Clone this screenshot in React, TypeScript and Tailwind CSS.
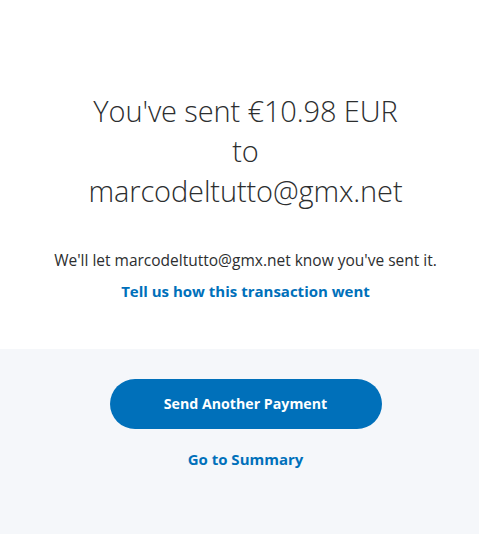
export default function App() {
  return (
    <div className="w-[479px] h-[534px] flex flex-col" style={{ fontFamily: '"Open Sans", "Liberation Sans", sans-serif' }}>
      <div className="bg-white h-[349px] flex flex-col items-center pt-[91px] pl-[12px]">
        <h1 className="text-[29px] leading-[40px] font-light text-[#2c2e2f] text-center tracking-[-0.12px]">
          You've sent €10.98 EUR<br />to<br />marcodeltutto@gmx.net
        </h1>
        <p className="mt-[39px] text-[15.5px] leading-[20px] text-[#2c2e2f]">We'll let marcodeltutto@gmx.net know you've sent it.</p>
        <a className="mt-[11px] text-[15px] leading-[20px] font-bold text-[#0070ba]">Tell us how this transaction went</a>
      </div>
      <div className="flex-1 bg-[#f5f7fa] flex flex-col items-center pt-[30px] pl-[12px]">
        <button className="w-[272px] h-[50px] rounded-full bg-[#0070ba] text-white text-[14.2px] font-bold">Send Another Payment</button>
        <a className="mt-[20px] text-[15px] leading-[20px] font-bold text-[#0070ba]">Go to Summary</a>
      </div>
    </div>
  );
}
